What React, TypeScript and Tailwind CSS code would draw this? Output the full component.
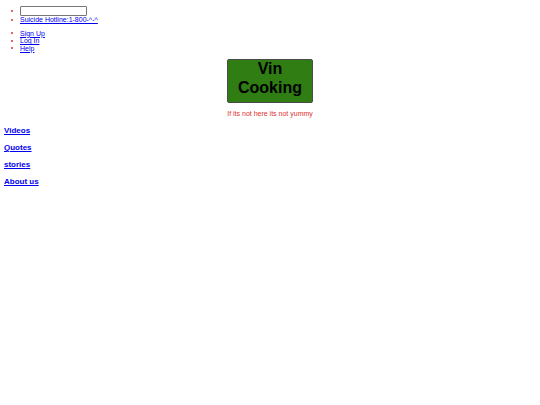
import React from "react";

function Item({ children, className = "" }: { children: React.ReactNode; className?: string }) {
  return (
    <li className={`flex items-center ${className}`}>
      <span className="ml-[11px] mr-[7px] h-[2px] w-[2px] shrink-0 rounded-full bg-[#e03030]" />
      {children}
    </li>
  );
}

export default function App() {
  return (
    <div className="min-h-[405px] w-[540px] bg-white text-black" style={{ fontFamily: '"Liberation Sans", Arial, sans-serif' }}>
      <div className="px-[4px] pt-[5px]">
        <ul className="-ml-[4px] text-[7px] leading-[7.5px]">
          <Item className="h-[11px]">
            <input className="h-[10px] w-[67px] rounded-[1px] border border-[#767676] bg-white" />
          </Item>
          <Item>
            <a href="#" className="text-[#0000ee] underline">Suicide Hotline:1-800-^-^</a>
          </Item>
        </ul>
        <ul className="-ml-[4px] mt-[6px] text-[7px] leading-[7.5px]">
          <Item><a href="#" className="text-[#0000ee] underline">Sign Up</a></Item>
          <Item><a href="#" className="text-[#0000ee] underline">Log In</a></Item>
          <Item><a href="#" className="text-[#0000ee] underline">Help</a></Item>
        </ul>
        <div className="mt-[7px] flex flex-col items-center">
          <div className="flex h-[44px] w-[86px] flex-col items-center rounded-[2px] border border-[#4a4a4a] bg-[#2f7d13] text-[16px] font-bold leading-[18.5px] text-black">
            <span>Vin</span>
            <span>Cooking</span>
          </div>
          <p className="mt-[7px] text-[7px] leading-[8px] text-[#e03030]">If its not here its not yummy</p>
        </div>
        <div className="mt-[8px] flex flex-col gap-[7px] text-[8px] font-bold leading-[10px]">
          <a href="#" className="text-[#0000ee] underline">Videos</a>
          <a href="#" className="text-[#0000ee] underline">Quotes</a>
          <a href="#" className="text-[#0000ee] underline">stories</a>
          <a href="#" className="text-[#0000ee] underline">About us</a>
        </div>
      </div>
    </div>
  );
}
